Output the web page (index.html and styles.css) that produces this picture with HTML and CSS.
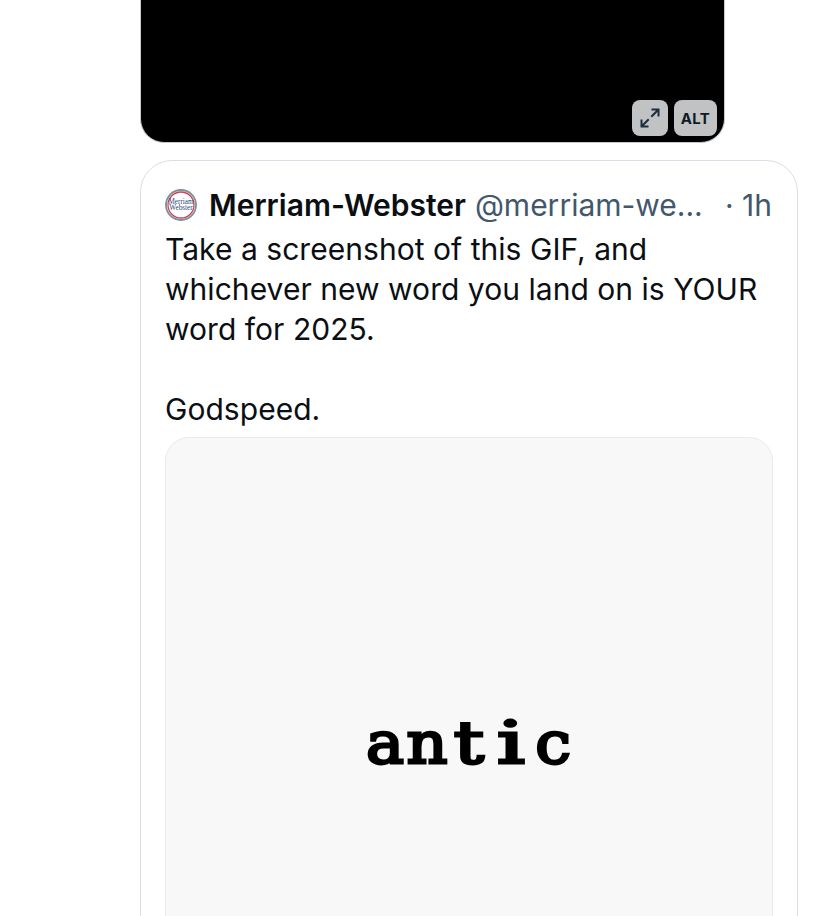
FILE: index.html
```html
<!DOCTYPE html>
<html lang="en">
<head>
<meta charset="utf-8">
<title>Post</title>
<link rel="stylesheet" href="styles.css">
</head>
<body>
<main class="thread">
  <div class="media">
    <div class="media-actions">
      <button class="media-btn" aria-label="Expand">
        <svg viewBox="0 0 24 24" width="24" height="24" fill="none" stroke="#1f2e3c" stroke-width="2" stroke-linecap="square"><path d="M14 10 20 4M14.5 3.5H20.5V9.5M10 14 4 20M3.5 14.5V20.5H9.5"/></svg>
      </button>
      <button class="media-btn alt">ALT</button>
    </div>
  </div>
  <article class="quote">
    <header class="quote-head">
      <svg class="avatar" viewBox="0 0 32 32" width="32" height="32">
        <circle cx="16" cy="16" r="15" fill="#fff" stroke="#7c9198" stroke-width="1.8"/>
        <circle cx="16" cy="16" r="13" fill="#fff" stroke="#cf4257" stroke-width="1.3"/>
        <text x="16" y="15" text-anchor="middle" class="avatar-text">Merriam</text>
        <text x="16" y="21.4" text-anchor="middle" class="avatar-text">Webster</text>
      </svg>
      <span class="name">Merriam-Webster</span>
      <span class="handle">@merriam-we...</span>
      <span class="time">· 1h</span>
    </header>
    <p class="body-text">Take a screenshot of this GIF, and whichever new word you land on is YOUR word for 2025.<br><br>Godspeed.</p>
    <div class="gif"><div class="gif-word"><span>a</span><span>n</span><span class="wide">t</span><span class="wider">i</span><span>c</span></div></div>
  </article>
</main>
</body>
</html>
```
FILE: styles.css
```css
html, body {
  margin: 0;
  height: 100%;
  background: #fff;
  overflow: hidden;
}
body {
  font-family: Inter, "Liberation Sans", sans-serif;
  color: #0b0f14;
}
.thread {
  margin-left: 140px;
  width: 658px;
  display: flex;
  flex-direction: column;
}
.media {
  position: relative;
  width: 585px;
  height: 143px;
  box-sizing: border-box;
  background: #000;
  border: 1px solid #c4cad0;
  border-top: 0;
  border-radius: 0 0 24px 24px;
}
.media-actions {
  position: absolute;
  right: 7px;
  bottom: 6px;
  display: flex;
  gap: 6px;
}
.media-btn {
  height: 36px;
  min-width: 36px;
  padding: 0;
  border: 0;
  border-radius: 8px;
  background: #c0c2c4;
  display: flex;
  align-items: center;
  justify-content: center;
  color: #0f1a24;
  font: 700 15px/1 Inter, sans-serif;
  letter-spacing: 0.4px;
}
.media-btn.alt {
  width: 43px;
}
.quote {
  margin-top: 17px;
  box-sizing: border-box;
  width: 658px;
  height: 800px;
  padding: 23px 25px 0 24px;
  border: 1px solid #dcdce6;
  border-radius: 32px;
}
.quote-head {
  display: flex;
  align-items: center;
  height: 42px;
  font-size: 30px;
  line-height: 42px;
  white-space: nowrap;
}
.avatar {
  flex: none;
  margin-right: 12px;
}
.avatar-text {
  font-family: "Liberation Serif", serif;
  font-size: 7.2px;
  fill: #2f4a78;
}
.name {
  font-weight: 600;
  margin-right: 9px;
}
.handle,
.time {
  color: #42576c;
}
.handle {
  flex: 1;
}
.body-text {
  margin: 3px 0 0;
  font-size: 30px;
  line-height: 40px;
  letter-spacing: 0.04px;
}
.gif {
  margin-top: 8px;
  width: 608px;
  height: 700px;
  box-sizing: border-box;
  padding-top: 270px;
  background: #f8f8f8;
  border: 1px solid #ebebef;
  border-radius: 24px;
  display: flex;
  justify-content: center;
}
.gif-word {
  display: flex;
  height: 70px;
  font-family: "DejaVu Serif", serif;
  font-size: 58px;
  line-height: 70px;
  color: #000;
  -webkit-text-stroke: 2.8px #000;
  filter: blur(0.7px);
}
.gif-word span {
  width: 42px;
  text-align: center;
  display: block;
  transform: scaleX(1.1);
}
.gif-word .wide {
  transform: scaleX(1.3);
}
.gif-word .wider {
  transform: scaleX(1.5);
}
```
